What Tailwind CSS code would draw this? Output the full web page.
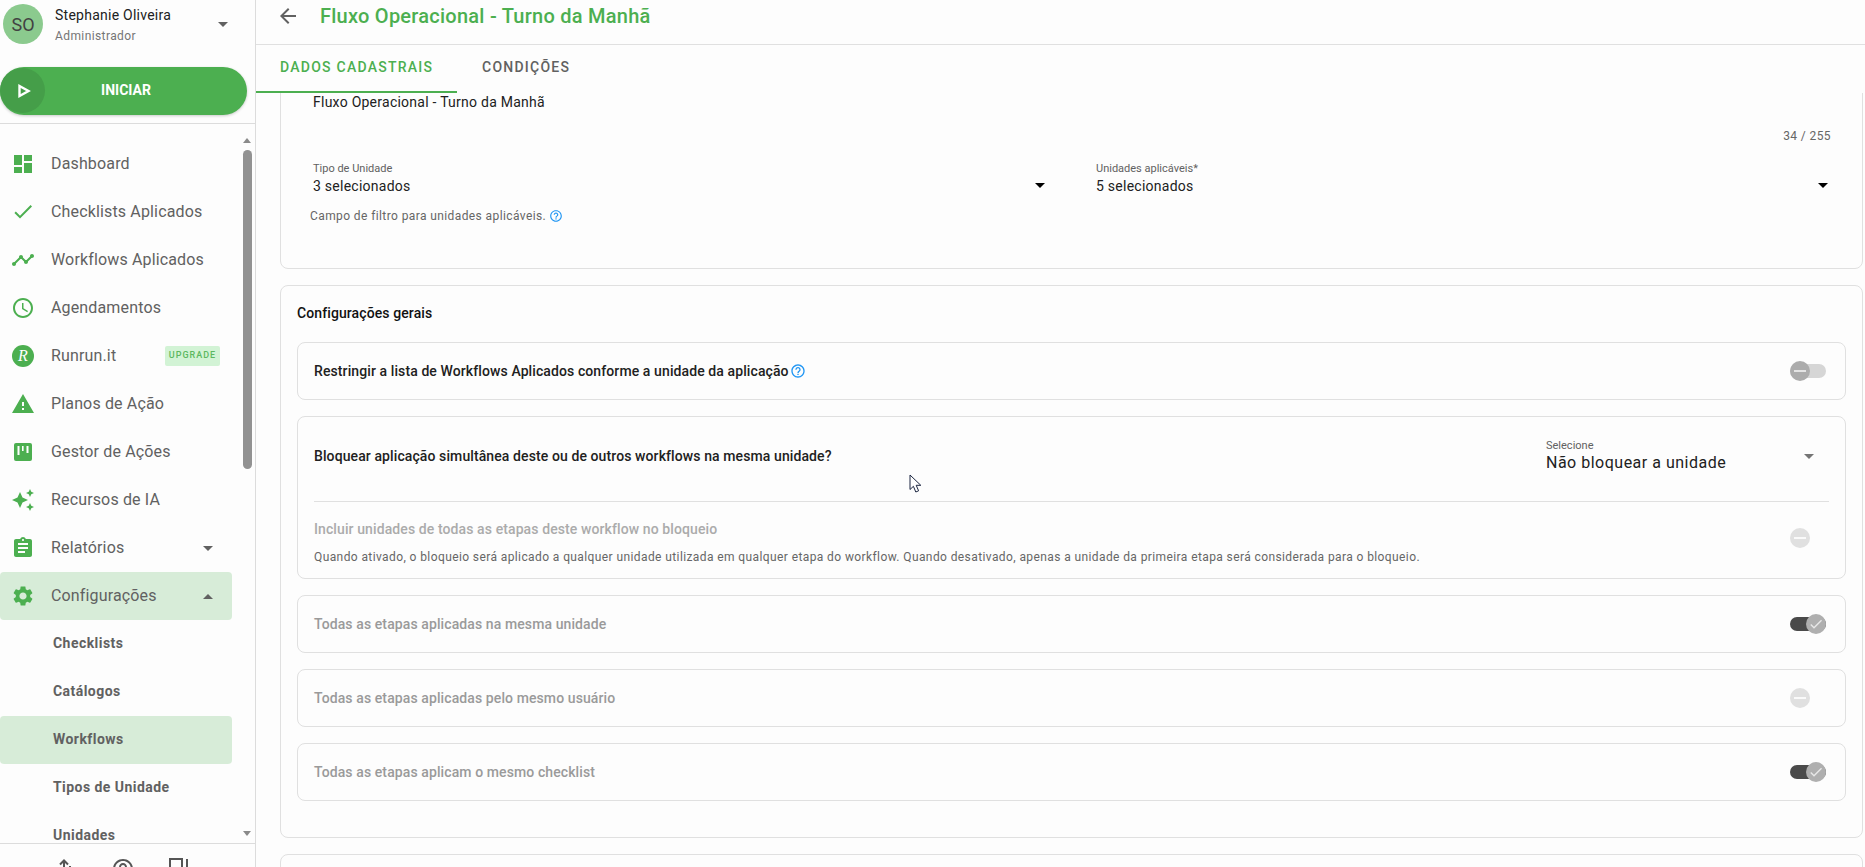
<!DOCTYPE html>
<html lang="pt-BR">
<head>
<meta charset="utf-8">
<title>Fluxo Operacional</title>
<script src="https://cdn.jsdelivr.net/npm/@tailwindcss/browser@4"></script>
</head>
<body class="m-0">
<div class="relative flex h-[867px] w-[1865px] overflow-hidden bg-[#fdfdfd] font-[family-name:Roboto,sans-serif]">

  <!-- Sidebar -->
  <aside class="flex w-[256px] shrink-0 flex-col border-r border-[#dcdcdc]">
    <div class="flex h-[67px] shrink-0 items-start">
      <div class="ml-[3px] mt-[4px] flex h-[40px] w-[40px] items-center justify-center rounded-full bg-[#8bca8e] text-[18px] text-[#424242]">SO</div>
      <div class="ml-[12px] mt-[6px] w-[163px]">
        <div class="text-[14px] leading-[18px] tracking-[0.25px] text-[#212121]">Stephanie Oliveira</div>
        <div class="mt-[4px] text-[12px] leading-[16px] tracking-[0.4px] text-[#757575]">Administrador</div>
      </div>
      <div class="mt-[22px] h-0 w-0 border-x-[5px] border-t-[5px] border-x-transparent border-t-[#616161]"></div>
    </div>
    <div class="relative flex h-[48px] w-[247px] shrink-0 items-center justify-center rounded-full bg-[#4caf50] pb-[1px] pl-[5px] text-[14px] font-bold text-white shadow-[0_1px_3px_rgba(0,0,0,0.2)]">
      <div class="absolute left-0 top-[1px] flex h-[45px] w-[45px] items-center justify-center rounded-full bg-[#459e49]">
        <svg width="14" height="14" viewBox="0 0 14 14" class="ml-[2px]"><path d="M2.5 2l9 5-9 5z" fill="none" stroke="#fff" stroke-width="2.4"/></svg>
      </div>
      INICIAR
    </div>
    <div class="mt-[8px] h-[1px] shrink-0 bg-[#dcdcdc]"></div>

    <nav class="relative flex-1 overflow-hidden pt-[16px] text-[16px] tracking-[0.15px] text-[#616161]">
      <div class="flex h-[48px] w-[232px] items-center gap-[16px] px-[11px]">
        <svg class="shrink-0" width="24" height="24" viewBox="0 0 24 24" fill="#4caf50"><path d="M3 13h8V3H3v10zm0 8h8v-6H3v6zm10 0h8V11h-8v10zm0-18v6h8V3h-8z"/></svg>
        <span>Dashboard</span>
      </div>
      <div class="flex h-[48px] w-[232px] items-center gap-[16px] px-[11px]">
        <svg class="shrink-0" width="24" height="24" viewBox="0 0 24 24" fill="#4caf50"><path d="M9 16.17L4.83 12l-1.42 1.41L9 19 21 7l-1.41-1.41z" transform="translate(0 -0.5)"/></svg>
        <span>Checklists Aplicados</span>
      </div>
      <div class="flex h-[48px] w-[232px] items-center gap-[16px] px-[11px]">
        <svg class="shrink-0" width="24" height="24" viewBox="0 0 24 24" fill="#4caf50"><path d="M23 8c0 1.1-.9 2-2 2-.18 0-.35-.02-.51-.07l-3.56 3.55c.05.16.07.34.07.52 0 1.1-.9 2-2 2s-2-.9-2-2c0-.18.02-.36.07-.52l-2.55-2.55c-.16.05-.34.07-.52.07s-.36-.02-.52-.07l-4.55 4.56c.05.16.07.33.07.51 0 1.1-.9 2-2 2s-2-.9-2-2 .9-2 2-2c.18 0 .35.02.51.07l4.56-4.55C8.02 9.36 8 9.18 8 9c0-1.1.9-2 2-2s2 .9 2 2c0 .18-.02.36-.07.52l2.55 2.55c.16-.05.34-.07.52-.07s.36.02.52.07l3.55-3.56C19.02 8.35 19 8.18 19 8c0-1.1.9-2 2-2s2 .9 2 2z"/></svg>
        <span>Workflows Aplicados</span>
      </div>
      <div class="flex h-[48px] w-[232px] items-center gap-[16px] px-[11px]">
        <svg class="shrink-0" width="24" height="24" viewBox="0 0 24 24" fill="#4caf50"><path d="M11.99 2C6.47 2 2 6.48 2 12s4.47 10 9.99 10C17.52 22 22 17.52 22 12S17.52 2 11.99 2zM12 20c-4.42 0-8-3.58-8-8s3.58-8 8-8 8 3.58 8 8-3.58 8-8 8zm.5-13H11v6l5.25 3.15.75-1.23-4.5-2.67z"/></svg>
        <span>Agendamentos</span>
      </div>
      <div class="flex h-[48px] w-[232px] items-center gap-[16px] px-[11px]">
        <div class="mx-[1px] flex h-[22px] w-[22px] shrink-0 items-center justify-center rounded-full bg-[#4caf50] font-[family-name:'Liberation_Serif',serif] text-[16px] italic leading-none text-white">R</div>
        <span class="w-[98px]">Runrun.it</span>
        <span class="flex h-[20px] w-[55px] items-center justify-center rounded-[2px] bg-[#d2f3d5] text-[9px] font-medium tracking-[1px] text-[#5cb860]">UPGRADE</span>
      </div>
      <div class="flex h-[48px] w-[232px] items-center gap-[16px] px-[11px]">
        <svg class="shrink-0" width="24" height="24" viewBox="0 0 24 24" fill="#4caf50"><path d="M1 21h22L12 2 1 21zm12-3h-2v-2h2v2zm0-4h-2v-4h2v4z"/></svg>
        <span>Planos de Ação</span>
      </div>
      <div class="flex h-[48px] w-[232px] items-center gap-[16px] px-[11px]">
        <svg class="shrink-0" width="24" height="24" viewBox="0 0 24 24"><path fill="#4caf50" d="M5 3h14a2 2 0 0 1 2 2v14a2 2 0 0 1-2 2H5a2 2 0 0 1-2-2V5a2 2 0 0 1 2-2z"/><path fill="#fff" d="M6.5 6h2v9h-2zM11 6h1.6v5H11zM15.5 6h2v7h-2z"/></svg>
        <span>Gestor de Ações</span>
      </div>
      <div class="flex h-[48px] w-[232px] items-center gap-[16px] px-[11px]">
        <svg class="shrink-0" width="24" height="24" viewBox="0 0 24 24" fill="#4caf50"><path d="M19 9l1.25-2.75L23 5l-2.75-1.25L19 1l-1.25 2.75L15 5l2.75 1.25L19 9zm-7.5.5L9 4 6.5 9.5 1 12l5.5 2.5L9 20l2.5-5.5L17 12l-5.5-2.5zM19 15l-1.25 2.75L15 19l2.75 1.25L19 23l1.25-2.75L23 19l-2.75-1.25L19 15z"/></svg>
        <span>Recursos de IA</span>
      </div>
      <div class="flex h-[48px] w-[232px] items-center gap-[16px] pl-[11px] pr-[19px]">
        <svg class="shrink-0" width="24" height="24" viewBox="0 0 24 24" fill="#4caf50"><path d="M19 3h-4.18C14.4 1.84 13.3 1 12 1c-1.3 0-2.4.84-2.82 2H5c-1.1 0-2 .9-2 2v14c0 1.1.9 2 2 2h14c1.1 0 2-.9 2-2V5c0-1.1-.9-2-2-2zm-7 0c.55 0 1 .45 1 1s-.45 1-1 1-1-.45-1-1 .45-1 1-1zm2 14H7v-2h7v2zm3-4H7v-2h10v2zm0-4H7V7h10v2z"/></svg>
        <span class="flex-1">Relatórios</span>
        <div class="h-0 w-0 border-x-[5px] border-t-[5px] border-x-transparent border-t-[#616161]"></div>
      </div>
      <div class="flex h-[48px] w-[232px] items-center gap-[16px] rounded-[4px] bg-[#d7ecd8] pl-[11px] pr-[19px]">
        <svg class="shrink-0" width="24" height="24" viewBox="0 0 24 24" fill="#4caf50"><path d="M19.14 12.94c.04-.3.06-.61.06-.94 0-.32-.02-.64-.07-.94l2.03-1.58c.18-.14.23-.41.12-.61l-1.92-3.32c-.12-.22-.37-.29-.59-.22l-2.39.96c-.5-.38-1.03-.7-1.62-.94l-.36-2.54c-.04-.24-.24-.41-.48-.41h-3.84c-.24 0-.43.17-.47.41l-.36 2.54c-.59.24-1.13.57-1.62.94l-2.39-.96c-.22-.08-.47 0-.59.22L2.74 8.87c-.12.21-.08.47.12.61l2.03 1.58c-.05.3-.09.63-.09.94s.02.64.07.94l-2.03 1.58c-.18.14-.23.41-.12.61l1.92 3.32c.12.22.37.29.59.22l2.39-.96c.5.38 1.03.7 1.62.94l.36 2.54c.05.24.24.41.48.41h3.84c.24 0 .44-.17.47-.41l.36-2.54c.59-.24 1.13-.56 1.62-.94l2.39.96c.22.08.47 0 .59-.22l1.92-3.32c.12-.22.07-.47-.12-.61l-2.01-1.58zM12 15.6c-1.98 0-3.6-1.62-3.6-3.6s1.62-3.6 3.6-3.6 3.6 1.62 3.6 3.6-1.62 3.6-3.6 3.6z"/></svg>
        <span class="flex-1">Configurações</span>
        <div class="h-0 w-0 border-x-[5px] border-b-[5px] border-x-transparent border-b-[#616161]"></div>
      </div>
      <div class="flex h-[48px] w-[232px] items-center pb-[1px] pl-[53px] text-[14px] font-bold tracking-[0.45px]">Checklists</div>
      <div class="flex h-[48px] w-[232px] items-center pb-[1px] pl-[53px] text-[14px] font-bold tracking-[0.45px]">Catálogos</div>
      <div class="flex h-[48px] w-[232px] items-center rounded-[4px] bg-[#d7ecd8] pb-[1px] pl-[53px] text-[14px] font-bold tracking-[0.45px]">Workflows</div>
      <div class="flex h-[48px] w-[232px] items-center pb-[1px] pl-[53px] text-[14px] font-bold tracking-[0.45px]">Tipos de Unidade</div>
      <div class="flex h-[48px] w-[232px] items-center pb-[1px] pl-[53px] text-[14px] font-bold tracking-[0.45px]">Unidades</div>

      <div class="absolute left-[243px] top-[14px] h-0 w-0 border-x-[4px] border-b-[5px] border-x-transparent border-b-[#8a8a8a]"></div>
      <div class="absolute left-[243px] top-[26px] h-[319px] w-[9px] rounded-full bg-[#929292]"></div>
      <div class="absolute left-[243px] top-[707px] h-0 w-0 border-x-[4px] border-t-[5px] border-x-transparent border-t-[#8a8a8a]"></div>
    </nav>

    <div class="flex h-[24px] shrink-0 items-start border-t border-[#dcdcdc] pl-[55px] pt-[13px]">
      <svg class="shrink-0" width="24" height="24" viewBox="0 0 24 24" fill="none" stroke="#555" stroke-width="2"><path d="M9 22V4M5 7.5L9 3.5l4 4"/><path d="M15 9v2"/></svg>
      <svg class="ml-[32px] shrink-0" width="24" height="24" viewBox="0 0 24 24" fill="#555"><path d="M11 18h2v-2h-2v2zm1-16C6.48 2 2 6.48 2 12s4.48 10 10 10 10-4.48 10-10S17.52 2 12 2zm0 18c-4.41 0-8-3.59-8-8s3.59-8 8-8 8 3.59 8 8-3.59 8-8 8zm0-14c-2.21 0-4 1.79-4 4h2c0-1.1.9-2 2-2s2 .9 2 2c0 2-3 1.75-3 5h2c0-2.25 3-2.5 3-5 0-2.21-1.79-4-4-4z"/></svg>
      <svg class="ml-[34px] shrink-0" width="24" height="24" viewBox="0 0 24 24" fill="none" stroke="#555" stroke-width="2"><path d="M1 22V2h12v20"/><path d="M18 2v20"/></svg>
    </div>
  </aside>

  <!-- Main -->
  <main class="flex min-w-0 flex-1 flex-col">
    <header class="flex h-[45px] shrink-0 items-center border-b border-[#e0e0e0] pb-[12px] pl-[20px]">
      <svg class="shrink-0" width="24" height="24" viewBox="0 0 24 24" fill="#616161"><path d="M20 11H7.83l5.59-5.59L12 4l-8 8 8 8 1.41-1.41L7.83 13H20v-2z"/></svg>
      <h1 class="ml-[20px] text-[20px] font-medium leading-[24px] tracking-[0.25px] text-[#4caf50]">Fluxo Operacional - Turno da Manhã</h1>
    </header>
    <div class="flex h-[48px] shrink-0 text-[14px] font-medium uppercase tracking-[1.25px]">
      <div class="flex w-[201px] items-center border-b-2 border-[#4caf50] pb-[1px] pl-[24px] text-[#4caf50]">Dados cadastrais</div>
      <div class="flex items-center pb-[3px] pl-[25px] text-[#616161]">Condições</div>
    </div>

    <div class="min-h-0 flex-1 overflow-hidden pl-[24px] pr-[2px]">
      <!-- Card 1 -->
      <section class="-mt-[20px] h-[196px] rounded-[8px] border border-[#e0e0e0] pl-[32px] pr-[31px] pt-[18px]">
        <div class="text-[14px] leading-[20px] tracking-[0.25px] text-[#212121]">Fluxo Operacional - Turno da Manhã</div>
        <div class="mt-[16px] text-right text-[12px] leading-[16px] tracking-[0.4px] text-[#666]">34 / 255</div>
        <div class="mt-[18px] grid grid-cols-2 gap-x-[48px]">
          <div class="flex items-center justify-between pr-[3px]">
            <div>
              <div class="text-[11px] leading-[14px] text-[#616161]">Tipo de Unidade</div>
              <div class="text-[14px] leading-[20px] tracking-[0.25px] text-[#212121]">3 selecionados</div>
            </div>
            <div class="mt-[12px] h-0 w-0 border-x-[5px] border-t-[5px] border-x-transparent border-t-black"></div>
          </div>
          <div class="flex items-center justify-between pr-[3px]">
            <div>
              <div class="text-[11px] leading-[14px] text-[#616161]">Unidades aplicáveis*</div>
              <div class="text-[14px] leading-[20px] tracking-[0.25px] text-[#212121]">5 selecionados</div>
            </div>
            <div class="mt-[12px] h-0 w-0 border-x-[5px] border-t-[5px] border-x-transparent border-t-black"></div>
          </div>
        </div>
        <div class="-ml-[3px] mt-[12px] flex items-center gap-[3px] text-[12px] leading-[16px] tracking-[0.4px] text-[#666]">
          <span>Campo de filtro para unidades aplicáveis.</span>
          <svg class="shrink-0" width="14" height="14" viewBox="0 0 24 24" fill="#2196f3"><path d="M11 18h2v-2h-2v2zm1-16C6.48 2 2 6.48 2 12s4.48 10 10 10 10-4.48 10-10S17.52 2 12 2zm0 18c-4.41 0-8-3.59-8-8s3.59-8 8-8 8 3.59 8 8-3.59 8-8 8zm0-14c-2.21 0-4 1.79-4 4h2c0-1.1.9-2 2-2s2 .9 2 2c0 2-3 1.75-3 5h2c0-2.25 3-2.5 3-5 0-2.21-1.79-4-4-4z"/></svg>
        </div>
      </section>

      <!-- Card 2 -->
      <section class="mt-[16px] rounded-[8px] border border-[#e0e0e0] px-[16px] pb-[36px] pt-[17px]">
        <div class="text-[14px] font-medium leading-[20px] tracking-[0.1px] text-[#111]">Configurações gerais</div>

        <div class="mt-[19px] flex h-[58px] items-center justify-between rounded-[8px] border border-[#e0e0e0] pl-[16px] pr-[19px]">
          <div class="flex items-center gap-[1px] text-[14px] font-medium tracking-[0.1px] text-[#212121]">
            <span>Restringir a lista de Workflows Aplicados conforme a unidade da aplicação</span>
            <svg class="shrink-0" width="16" height="16" viewBox="0 0 24 24" fill="#2196f3"><path d="M11 18h2v-2h-2v2zm1-16C6.48 2 2 6.48 2 12s4.48 10 10 10 10-4.48 10-10S17.52 2 12 2zm0 18c-4.41 0-8-3.59-8-8s3.59-8 8-8 8 3.59 8 8-3.59 8-8 8zm0-14c-2.21 0-4 1.79-4 4h2c0-1.1.9-2 2-2s2 .9 2 2c0 2-3 1.75-3 5h2c0-2.25 3-2.5 3-5 0-2.21-1.79-4-4-4z"/></svg>
          </div>
          <div class="flex h-[14px] w-[36px] items-center justify-start rounded-full bg-[#d6d6d6]">
            <div class="flex h-[20px] w-[20px] shrink-0 items-center justify-center rounded-full bg-[#acacac]">
              <div class="h-[2px] w-[12px] bg-[#e4e4e4]"></div>
            </div>
          </div>
        </div>

        <div class="mt-[16px] h-[163px] rounded-[8px] border border-[#e0e0e0] px-[16px]">
          <div class="flex h-[78px] items-center justify-between">
            <div class="text-[14px] font-medium tracking-[0.1px] text-[#212121]">Bloquear aplicação simultânea deste ou de outros workflows na mesma unidade?</div>
            <div class="flex w-[283px] items-center justify-between pr-[15px]">
              <div>
                <div class="text-[11px] leading-[14px] text-[#616161]">Selecione</div>
                <div class="text-[16px] leading-[20px] tracking-[0.5px] text-[#212121]">Não bloquear a unidade</div>
              </div>
              <div class="h-0 w-0 border-x-[5px] border-t-[5px] border-x-transparent border-t-[#757575]"></div>
            </div>
          </div>
          <div class="mt-[6px] h-[1px] bg-[#e0e0e0]"></div>
          <div class="mt-[17px] flex items-start justify-between pr-[3px]">
            <div>
              <div class="text-[14px] font-medium leading-[20px] tracking-[0.1px] text-[#ababab]">Incluir unidades de todas as etapas deste workflow no bloqueio</div>
              <div class="mt-[10px] text-[12px] leading-[16px] tracking-[0.4px] text-[#666]">Quando ativado, o bloqueio será aplicado a qualquer unidade utilizada em qualquer etapa do workflow. Quando desativado, apenas a unidade da primeira etapa será considerada para o bloqueio.</div>
            </div>
            <div class="mt-[9px] flex h-[20px] w-[36px] shrink-0">
              <div class="flex h-[20px] w-[20px] items-center justify-center rounded-full bg-[#e0e0e0]">
                <div class="h-[2px] w-[12px] bg-[#fafafa]"></div>
              </div>
            </div>
          </div>
        </div>

        <div class="mt-[16px] flex h-[58px] items-center justify-between rounded-[8px] border border-[#e0e0e0] pl-[16px] pr-[19px]">
          <span class="text-[14px] font-medium tracking-[0.1px] text-[#9a9a9a]">Todas as etapas aplicadas na mesma unidade</span>
          <div class="flex h-[14px] w-[36px] items-center justify-end rounded-full bg-[#4a4a4a]">
            <div class="flex h-[20px] w-[20px] shrink-0 items-center justify-center rounded-full bg-[#afafaf]">
              <svg width="16" height="16" viewBox="0 0 24 24" fill="#e8e8e8"><path d="M9 16.17L4.83 12l-1.42 1.41L9 19 21 7l-1.41-1.41z"/></svg>
            </div>
          </div>
        </div>

        <div class="mt-[16px] flex h-[58px] items-center justify-between rounded-[8px] border border-[#e0e0e0] pl-[16px] pr-[19px]">
          <span class="text-[14px] font-medium tracking-[0.1px] text-[#9a9a9a]">Todas as etapas aplicadas pelo mesmo usuário</span>
          <div class="flex h-[20px] w-[36px] shrink-0">
            <div class="flex h-[20px] w-[20px] items-center justify-center rounded-full bg-[#e0e0e0]">
              <div class="h-[2px] w-[12px] bg-[#fafafa]"></div>
            </div>
          </div>
        </div>

        <div class="mt-[16px] flex h-[58px] items-center justify-between rounded-[8px] border border-[#e0e0e0] pl-[16px] pr-[19px]">
          <span class="text-[14px] font-medium tracking-[0.1px] text-[#9a9a9a]">Todas as etapas aplicam o mesmo checklist</span>
          <div class="flex h-[14px] w-[36px] items-center justify-end rounded-full bg-[#4a4a4a]">
            <div class="flex h-[20px] w-[20px] shrink-0 items-center justify-center rounded-full bg-[#afafaf]">
              <svg width="16" height="16" viewBox="0 0 24 24" fill="#e8e8e8"><path d="M9 16.17L4.83 12l-1.42 1.41L9 19 21 7l-1.41-1.41z"/></svg>
            </div>
          </div>
        </div>
      </section>

      <!-- Card 3 -->
      <section class="mt-[16px] h-[60px] rounded-[8px] border border-[#e0e0e0]"></section>
    </div>
  </main>

  <!-- Mouse pointer -->
  <svg class="absolute left-[909px] top-[474px]" width="14" height="20" viewBox="0 0 14 20"><path d="M1 1v14.5l3.4-3.2 2.4 5.7 2.8-1.2-2.4-5.5h4.6z" fill="#fff" stroke="#1b2540" stroke-width="1"/></svg>
</div>
</body>
</html>
